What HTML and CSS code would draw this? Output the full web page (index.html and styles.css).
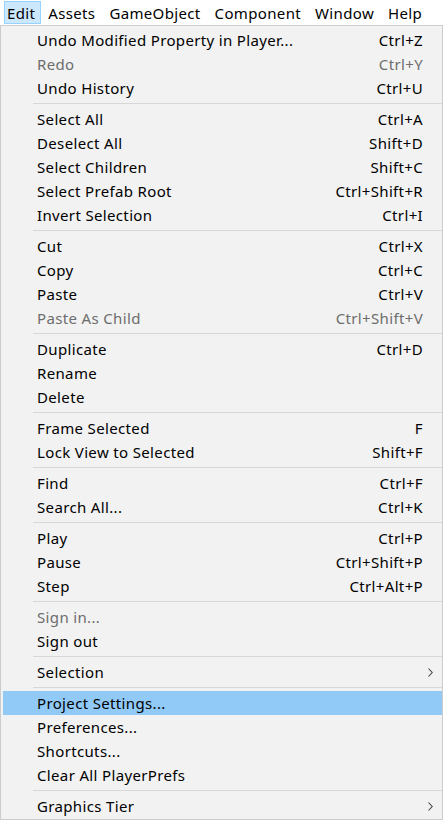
FILE: index.html
```html
<!DOCTYPE html>
<html>
<head>
<meta charset="utf-8">
<link rel="stylesheet" href="styles.css">
</head>
<body>
<div class="menubar">
  <div class="mb-item active">Edit</div>
  <div class="mb-item">Assets</div>
  <div class="mb-item">GameObject</div>
  <div class="mb-item">Component</div>
  <div class="mb-item">Window</div>
  <div class="mb-item">Help</div>
</div>
<div class="menu">
  <div class="item"><span class="label">Undo Modified Property in Player...</span><span class="key">Ctrl+Z</span></div>
  <div class="item disabled"><span class="label">Redo</span><span class="key">Ctrl+Y</span></div>
  <div class="item"><span class="label">Undo History</span><span class="key">Ctrl+U</span></div>
  <div class="sep"></div>
  <div class="item"><span class="label">Select All</span><span class="key">Ctrl+A</span></div>
  <div class="item"><span class="label">Deselect All</span><span class="key">Shift+D</span></div>
  <div class="item"><span class="label">Select Children</span><span class="key">Shift+C</span></div>
  <div class="item"><span class="label">Select Prefab Root</span><span class="key">Ctrl+Shift+R</span></div>
  <div class="item"><span class="label">Invert Selection</span><span class="key">Ctrl+I</span></div>
  <div class="sep"></div>
  <div class="item"><span class="label">Cut</span><span class="key">Ctrl+X</span></div>
  <div class="item"><span class="label">Copy</span><span class="key">Ctrl+C</span></div>
  <div class="item"><span class="label">Paste</span><span class="key">Ctrl+V</span></div>
  <div class="item disabled"><span class="label">Paste As Child</span><span class="key">Ctrl+Shift+V</span></div>
  <div class="sep"></div>
  <div class="item"><span class="label">Duplicate</span><span class="key">Ctrl+D</span></div>
  <div class="item"><span class="label">Rename</span><span class="key"></span></div>
  <div class="item"><span class="label">Delete</span><span class="key"></span></div>
  <div class="sep"></div>
  <div class="item"><span class="label">Frame Selected</span><span class="key">F</span></div>
  <div class="item"><span class="label">Lock View to Selected</span><span class="key">Shift+F</span></div>
  <div class="sep"></div>
  <div class="item"><span class="label">Find</span><span class="key">Ctrl+F</span></div>
  <div class="item"><span class="label">Search All...</span><span class="key">Ctrl+K</span></div>
  <div class="sep"></div>
  <div class="item"><span class="label">Play</span><span class="key">Ctrl+P</span></div>
  <div class="item"><span class="label">Pause</span><span class="key">Ctrl+Shift+P</span></div>
  <div class="item"><span class="label">Step</span><span class="key">Ctrl+Alt+P</span></div>
  <div class="sep"></div>
  <div class="item disabled"><span class="label">Sign in...</span><span class="key"></span></div>
  <div class="item"><span class="label">Sign out</span><span class="key"></span></div>
  <div class="sep"></div>
  <div class="item"><span class="label">Selection</span><span class="key"></span><svg class="arrow" width="5" height="9" viewBox="0 0 5 9"><path d="M0.5 0.5 L4.2 4.5 L0.5 8.5" fill="none" stroke="#444" stroke-width="1.1"/></svg></div>
  <div class="sep"></div>
  <div class="item hover"><span class="label">Project Settings...</span><span class="key"></span></div>
  <div class="item"><span class="label">Preferences...</span><span class="key"></span></div>
  <div class="item"><span class="label">Shortcuts...</span><span class="key"></span></div>
  <div class="item"><span class="label">Clear All PlayerPrefs</span><span class="key"></span></div>
  <div class="sep"></div>
  <div class="item"><span class="label">Graphics Tier</span><span class="key"></span><svg class="arrow" width="5" height="9" viewBox="0 0 5 9"><path d="M0.5 0.5 L4.2 4.5 L0.5 8.5" fill="none" stroke="#444" stroke-width="1.1"/></svg></div>
</div>
</body>
</html>
```
FILE: styles.css
```css
html, body {
  margin: 0;
  padding: 0;
  background: #ffffff;
}
body {
  font-family: "Noto Sans", "Open Sans", sans-serif;
  font-size: 15px;
  letter-spacing: 0.35px;
  color: #000;
}
.menubar {
  display: flex;
  height: 25px;
  padding: 1px 0 0 0;
  box-sizing: border-box;
}
.mb-item {
  height: 23px;
  line-height: 22px;
  padding: 0 6px;
  border: 1px solid transparent;
  box-sizing: border-box;
}
.mb-item.active {
  margin-left: 4px;
  padding: 0 5px 0 2px;
  background: #cce8ff;
  border-color: #99d1ff;
}
.menu {
  width: 443px;
  box-sizing: border-box;
  border: 1px solid #cccccc;
  background: #f2f2f2;
  padding: 2px 0 1px 2px;
}
.item {
  display: grid;
  grid-template-columns: 1fr auto 19px;
  align-items: center;
  height: 24px;
  line-height: 24px;
  padding-left: 34px;
  white-space: nowrap;
}
.item.disabled {
  color: #6d6d6d;
}
.item.hover {
  background: #91c9f7;
}
.key {
  text-align: right;
}
.arrow {
  grid-column: 3;
  margin-left: 5px;
  display: block;
}
.sep {
  height: 1px;
  background: #d7d7d7;
  margin: 3px 0 3px 30px;
}
```
